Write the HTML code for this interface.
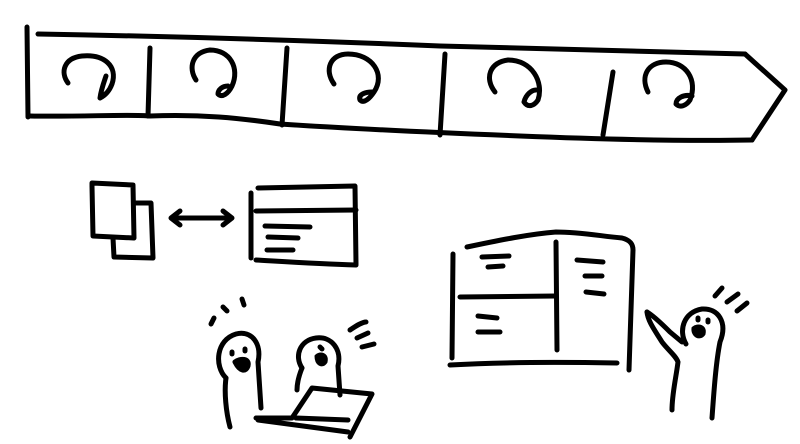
<!DOCTYPE html>
<html><head><meta charset="utf-8"><style>html,body{margin:0;padding:0;background:#fff;width:800px;height:444px;overflow:hidden}</style></head>
<body>
<svg width="800" height="444" viewBox="0 0 800 444" xmlns="http://www.w3.org/2000/svg" fill="none" stroke="#000" stroke-linecap="round" stroke-linejoin="round" stroke-width="5">
<!-- banner -->
<path d="M27 27 L28 117"/>
<path d="M38 34 C150 36 300 40 440 46 C560 50 680 52 745 54"/>
<path d="M745 54 L785 90 L752 140"/>
<path d="M30 116 C80 117 130 114 150 116 C200 114 240 118 280 124 C340 128 420 132 520 136 C620 140 700 141 752 140"/>
<path d="M150 48 L148 116"/>
<path d="M287 48 L282 125"/>
<path d="M445 54 L440 135"/>
<path d="M613 72 L603 135"/>
<!-- swirls -->
<g stroke-width="5">
<path d="M68 83 C60 72 64 58 82 56 C104 54 118 66 112 84 C109 92 104 96 100 98 C101 90 104 82 106 76"/>
<path d="M196 80 C188 68 192 52 210 50 C230 50 240 68 232 86 C228 94 222 98 218 94 C218 90 222 86 228 86"/>
<path d="M334 84 C324 70 330 54 348 54 C372 54 386 74 374 92 C370 98 364 104 360 100 C358 94 366 92 372 92"/>
<path d="M495 92 C484 78 490 62 508 60 C532 60 544 82 538 100 C534 106 528 108 524 102 C526 94 532 90 536 90"/>
<path d="M648 92 C640 76 648 62 666 62 C686 62 698 80 690 100 C686 106 680 108 676 104 C676 98 684 94 692 96"/>
</g>
<!-- phone pages -->
<path d="M92 186 L93 236 L134 238 L133 185 L92 183 Z"/>
<path d="M134 203 L151 203 L153 258 L114 257 L113 238"/>
<!-- double arrow -->
<path d="M172 218 L231 218"/>
<path d="M180 211 L171 218 L180 225"/>
<path d="M223 211 L232 218 L223 225"/>
<!-- window -->
<path d="M251 193 L251 258"/>
<path d="M258 188 L355 186 L356 264"/>
<path d="M256 211 L356 210"/>
<path d="M256 260 C290 262 320 264 356 265"/>
<path d="M265 226 L310 227"/>
<path d="M268 237 L298 238"/>
<path d="M267 250 L293 250"/>
<!-- board -->
<path d="M467 247 C500 240 530 234 556 232 C580 232 600 236 622 238 C630 240 633 244 633 250 L629 370"/>
<path d="M453 254 L452 358"/>
<path d="M556 242 L557 350"/>
<path d="M460 297 L556 296"/>
<path d="M450 365 C500 362 560 362 617 363"/>
<path d="M482 257 L509 256"/><path d="M488 267 L503 266"/>
<path d="M577 260 L603 262"/><path d="M585 276 L602 276"/><path d="M586 292 L604 294"/>
<path d="M478 316 L497 318"/><path d="M478 332 L500 332"/>
<!-- person 1 -->
<path d="M226 378 C214 366 216 340 236 334 C252 330 262 344 258 362 L261 408"/>
<path d="M226 378 C224 392 226 412 230 427"/>
<path d="M232 352 L232 354"/><path d="M245 349 L245 351"/>
<path d="M235 362 C240 358 250 358 248 366 C246 372 240 372 235 362 Z" fill="#000"/>
<path d="M211 324 L214 318"/><path d="M223 307 L227 311"/><path d="M242 299 L244 305"/>
<!-- person 2 -->
<path d="M302 368 C294 356 300 340 316 338 C332 336 342 350 338 366 L340 395"/>
<path d="M302 368 C298 378 297 386 297 390"/>
<path d="M320 347 L322 349"/>
<path d="M316 356 C320 352 328 354 326 362 C322 368 316 364 316 356 Z" fill="#000" stroke-width="3"/>
<path d="M350 330 C356 326 362 322 366 322"/><path d="M357 338 L368 333"/><path d="M362 347 L374 344"/>
<!-- laptop -->
<path d="M256 418 L292 418 L312 388 L372 394 L350 437"/>
<path d="M258 420 C290 424 320 428 348 432"/>
<path d="M296 418 L348 420"/>
<!-- person 3 -->
<path d="M647 312 C654 316 664 326 670 332 L682 342"/>
<path d="M647 312 C648 322 656 332 662 342 C668 350 676 356 678 362 C676 378 672 394 672 410"/>
<path d="M686 344 C678 330 684 312 702 309 C718 308 728 322 720 342 C716 362 714 390 712 418"/>
<path d="M698 318 L698 320"/><path d="M708 320 L708 322"/>
<path d="M693 328 C698 324 706 326 704 334 C700 340 692 336 693 328 Z" fill="#000" stroke-width="3"/>
<path d="M715 296 L722 288"/><path d="M727 302 L738 294"/><path d="M737 311 L747 303"/>
</svg>
</body></html>
